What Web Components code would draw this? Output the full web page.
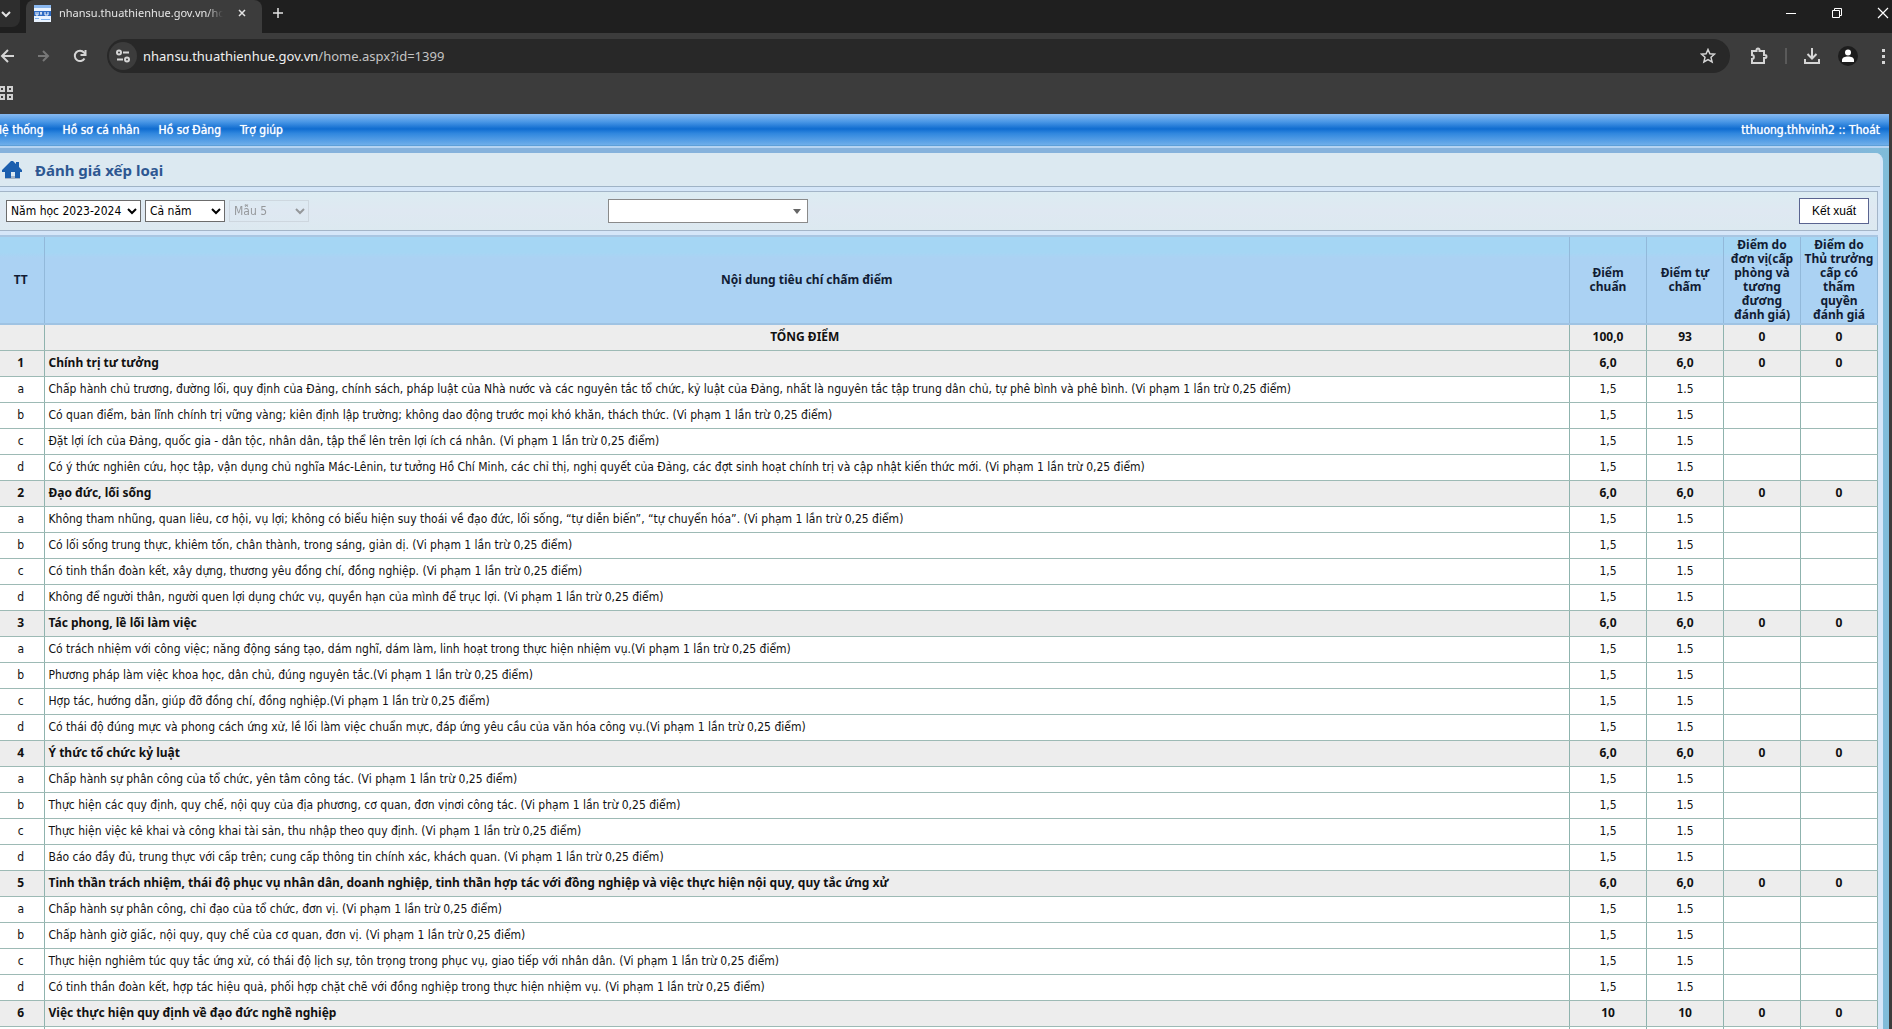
<!DOCTYPE html>
<html lang="vi">
<head>
<meta charset="utf-8">
<title>Đánh giá xếp loại</title>
<style>
html,body{margin:0;height:100%}
body{--ui:"Noto Sans","Open Sans",sans-serif;--text:"DejaVu Sans Condensed","DejaVu Sans",sans-serif;background:#3c3c3c;font-family:var(--ui);font-size:12px;color:#111;overflow:hidden}
</style>
</head>
<body>
<browser-window>
  <browser-tabs slot="tabs">nhansu.thuathienhue.gov.vn/home.aspx</browser-tabs>
  <browser-toolbar slot="toolbar" host="nhansu.thuathienhue.gov.vn" path="/home.aspx?id=1399"></browser-toolbar>
  <site-menu user="tthuong.thhvinh2">
    <a href="#">Hệ thống</a>
    <a href="#">Hồ sơ cá nhân</a>
    <a href="#">Hồ sơ Đảng</a>
    <a href="#">Trợ giúp</a>
  </site-menu>
  <page-panel>
    <page-heading>Đánh giá xếp loại</page-heading>
    <filter-bar></filter-bar>
    <score-table></score-table>
  </page-panel>
</browser-window>
<script>
class Base extends HTMLElement {
  connectedCallback() {
    if (this.shadowRoot) return;
    this.attachShadow({ mode: "open" }).innerHTML = this.view();
  }
}

customElements.define("browser-window", class extends Base {
  view() { return `<style>
    :host{display:flex;flex-direction:column;height:100vh;overflow:hidden;background:#3c3c3c}
    header{flex:none;height:114px;background:#3c3c3c}
    nav{height:28px;display:flex;align-items:center}
    nav svg{display:block}
    main{flex:1;min-height:0;overflow:hidden;margin-right:3px;background:#89b6dd;display:flex;flex-direction:column}
  </style>
  <header>
    <slot name="tabs"></slot>
    <slot name="toolbar"></slot>
    <nav aria-label="Bookmarks"><svg width="14" height="16" viewBox="0 0 14 16" fill="none" stroke="#d0d0d0" stroke-width="2"><path d="M0 2h4v4h-4zM8 2h4v4h-4zM0 10h4v4h-4zM8 10h4v4h-4z"/></svg></nav>
  </header>
  <main><slot></slot></main>`; }
});

customElements.define("browser-tabs", class extends Base {
  view() { return `<style>
    :host{display:flex;height:33px;background:#1f1f1f;color:#e6e6e6}
    button{border:0;background:none;padding:0;margin:0;display:grid;place-items:center;color:inherit}
    svg{display:block;fill:none;stroke:#e3e3e3;stroke-width:2}
    .list{width:20px;height:27px;background:#2e2e2e;border-radius:0 0 8px 0;margin-right:6px;padding-right:8px}
    .tab{width:236px;box-sizing:border-box;background:#3c3c3c;border-radius:8px 8px 0 0;display:flex;align-items:center;padding:0 16px 7px 8px}
    .tab .fav{flex:none;margin-right:8px}
    .name{flex:none;width:164px;overflow:hidden;white-space:nowrap;font-size:11px;line-height:18px;-webkit-mask:linear-gradient(90deg,#000 148px,transparent 164px);mask:linear-gradient(90deg,#000 148px,transparent 164px)}
    .close{margin-left:auto}
    .new{width:32px;padding-bottom:7px}
    .win{margin-left:auto;display:flex;padding-bottom:7px}
    .win button{width:46px}
    .win button:last-child{width:46px;margin-right:-14px}
    .win svg{stroke-width:1;stroke:#fff}
  </style>
  <button class="list" aria-label="Search tabs"><svg width="10" height="8" viewBox="0 0 10 8"><path d="M1 2l4 4 4-4"/></svg></button>
  <div class="tab">
    <svg class="fav" width="17" height="17" viewBox="0 0 17 17" stroke="none"><path fill="#e9f3ff" stroke="none" d="M0 0h17v17H0z"/><path fill="#8ab8f0" stroke="none" d="M0 0h17v3H0z"/><path fill="#2f6cc4" stroke="none" d="M0 6h17v5H0z"/><path stroke="#fff" stroke-width="1" d="M2 7v3h2V7M7 7v3M6 8h2M11 7v3h3V7"/><path stroke="#7fb2ee" stroke-width="1" d="M1 13.500h4M7 14.500h9"/></svg>
    <span class="name"><slot></slot></span>
    <button class="close" aria-label="Close tab"><svg width="8" height="8" viewBox="0 0 8 8"><path d="M1 1l6 6M7 1L1 7" stroke-width="1.500"/></svg></button>
  </div>
  <button class="new" aria-label="New tab"><svg width="12" height="12" viewBox="0 0 12 12"><path d="M6 1v10M1 6h10" stroke-width="1.500"/></svg></button>
  <div class="win">
    <button aria-label="Minimize"><svg width="12" height="12" viewBox="0 0 12 12"><path d="M1 6.500h10"/></svg></button>
    <button aria-label="Restore"><svg width="12" height="12" viewBox="0 0 12 12"><path d="M1.500 3.500h7v7h-7zM3.500 3V1.500h7v7H9"/></svg></button>
    <button aria-label="Close"><svg width="12" height="12" viewBox="0 0 12 12"><path d="M1 1l10 10M11 1L1 11" stroke-width="1.200"/></svg></button>
  </div>`; }
});

customElements.define("browser-toolbar", class extends Base {
  view() { return `<style>
    :host{display:flex;align-items:center;height:46px;color:#e3e3e3}
    button{border:0;background:none;padding:0;display:grid;place-items:center;color:inherit}
    svg{display:block;fill:none;stroke:#d5d5d5;stroke-width:2}
    .back{width:16px}.fwd{width:20px;margin-left:17px}.re{width:20px;margin:0 17px}
    .fwd svg{stroke:#777}
    .bar{flex:1;height:34px;border-radius:17px;background:#282828;display:flex;align-items:center;padding:0 14px 0 2px;min-width:0}
    .site{width:28px;height:28px;border-radius:14px;background:#3c3c3c;margin-right:6px}
    .url{flex:1;font-size:13px;line-height:20px;color:#c4c4c4;white-space:nowrap}
    .url b{font-weight:400;color:#f0f0f0}
    .end{display:flex;align-items:center;width:162px}
    .ext{width:20px;margin-left:19px}
    .sep{width:2px;height:16px;background:#5a5a5a;margin:0 16px}
    .prof{width:20px;margin-left:17px}
    .more{margin-left:auto;margin-right:6px}
  </style>
  <button class="back" aria-label="Back"><svg width="16" height="14" viewBox="0 0 16 14"><path d="M14 7H3M8 1L2 7l6 6"/></svg></button>
  <button class="fwd" aria-label="Forward"><svg width="14" height="14" viewBox="0 0 14 14"><path d="M2 7h10M7 2l5 5-5 5"/></svg></button>
  <button class="re" aria-label="Reload"><svg width="16" height="16" viewBox="0 0 16 16"><path d="M12.500 10.500A5.200 5.200 0 1 1 12 4.500L13.500 6"/><path d="M13.500 2v5h-5"/></svg></button>
  <div class="bar">
    <button class="site" aria-label="Site information"><svg width="14" height="14" viewBox="0 0 14 14" stroke-width="1.600"><circle cx="3" cy="3.500" r="2"/><path d="M7 3.500h6M1 10.500h6"/><circle cx="11" cy="10.500" r="2"/></svg></button>
    <span class="url"><b>${this.getAttribute("host")}</b>${this.getAttribute("path")}</span>
    <button aria-label="Bookmark this page"><svg width="16" height="16" viewBox="0 0 16 16"><path stroke-width="1.500" d="M8 1.500l1.900 4.300 4.600.4-3.500 3.100 1.100 4.600L8 11.500l-4.100 2.400L5 9.300 1.500 6.200l4.600-.4z"/></svg></button>
  </div>
  <div class="end">
    <button class="ext" aria-label="Extensions"><svg width="18" height="18" viewBox="0 0 18 18"><path d="M2 4h4.500V3a1.500 1.500 0 0 1 3 0v1H14v4h1a1.500 1.500 0 0 1 0 3h-1v5H2v-4c2.500 0 2.500-4 0-4z"/></svg></button>
    <span class="sep"></span>
    <button aria-label="Downloads"><svg width="18" height="18" viewBox="0 0 18 18"><path d="M9 1v10M4.500 7L9 11.500 13.500 7M2 12v4h14v-4"/></svg></button>
    <button class="prof" aria-label="Profile"><svg width="20" height="20" viewBox="0 0 20 20" stroke="none"><circle cx="10" cy="10" r="10" fill="#1d1d1d" stroke="none"/><circle cx="10" cy="6.500" r="3" fill="#fff" stroke="none"/><path fill="#fff" stroke="none" d="M4 16v-2c0-2.500 3-3.500 6-3.500s6 1 6 3.500v2z"/></svg></button>
    <button class="more" aria-label="Menu"><svg width="4" height="16" viewBox="0 0 4 16"><path fill="#d5d5d5" stroke="none" d="M0 1h3v3H0zM0 7h3v3H0zM0 13h3v3H0z"/></svg></button>
  </div>`; }
});

customElements.define("site-menu", class extends Base {
  view() { return `<style>
    :host{flex:none;display:flex;align-items:center;box-sizing:border-box;height:32px;padding:0 9px 0 0;color:#fff;font-family:var(--text);font-size:12px;white-space:nowrap;
      background:linear-gradient(#86b9f0,#4a97e6 25%,#0f6cd0 48%,#2f86de 62%,#6eaeea 100%);border-bottom:1px solid #5d9fd8;text-shadow:0 0 1px #fff}
    ::slotted(a),a{color:#fff;text-decoration:none}
    nav{display:flex;gap:19px;margin-left:-6px}
    .user{margin-left:auto}
  </style>
  <nav><slot></slot></nav>
  <span class="user">${this.getAttribute("user")} :: <a href="#">Thoát</a></span>`; }
});

customElements.define("page-panel", class extends Base {
  view() { return `<style>
    :host{flex:1;min-height:0;display:block;box-sizing:border-box;border-top:2px solid #b5d4f2;padding-top:5px;background:linear-gradient(90deg,#86b2dc calc(100% - 60px),#7fbcd9)}
    section{height:100%;margin-right:6px;background:#d5e6f8;border-radius:0 8px 0 0;overflow:hidden}
  </style><section><slot></slot></section>`; }
});

customElements.define("page-heading", class extends Base {
  view() { return `<style>
    :host{display:block;margin-right:3px;background:#dce9f1;border-bottom:1px solid #9fb3c6}
    h1{margin:0;height:33px;display:flex;align-items:center;gap:13px;padding-left:2px;font-size:15px;line-height:20px;font-weight:700;color:#2d5791}
    svg{display:block}
  </style>
  <h1><svg width="20" height="20" viewBox="0 0 20 20"><path fill="#8a9db5" d="M3 16h15v3H3z" opacity=".7"/><path fill="#1c5fae" d="M9 1h2l3 3V2h3v5l3 3v2h-2v6h-5v-6H9v6H3v-6H0v-2z"/></svg><slot></slot></h1>`; }
});

customElements.define("filter-bar", class extends Base {
  view() { return `<style>
    :host{display:flex;align-items:center;box-sizing:border-box;height:40px;margin:4px 5px 0 0;padding:0 8px 0 6px;background:linear-gradient(#dcecf2,#dfe8f2 50%,#dce9f0);border:solid #a3b5c8;border-width:1px 1px 1px 0}
    select,input,button{font-family:var(--text);font-size:12px;color:#000;box-sizing:border-box;margin:0;border-radius:0}
    select{height:22px;background:#fff;border:1px solid #6c6c6c;padding:0}
    .year{width:135px}.term{width:80px;margin-left:4px}.form{width:80px;margin-left:4px;border-color:#c8d0d8;background:transparent;color:#777}
    .left{width:608px;box-sizing:border-box;margin-right:-6px}
    .left,.combo{display:flex;align-items:center}
    .combo{width:200px;height:24px;box-sizing:border-box;border:1px solid #8a8a8a;background:#fff}
    .combo input{flex:1;min-width:0;border:0;background:none;height:20px;outline:0}
    .combo button{border:0;background:none;width:20px;height:20px;padding:0;display:grid;place-items:center}
    svg{display:block}
    .out{margin-left:auto;width:70px;height:26px;border:1px solid #5a6490;background:#fff;padding:0;font-family:"Liberation Sans",sans-serif}
  </style>
  <div class="left">
    <select class="year" aria-label="Năm học"><option>Năm học 2023-2024</option></select>
    <select class="term" aria-label="Kỳ"><option>Cả năm</option></select>
    <select class="form" aria-label="Mẫu" disabled><option>Mẫu 5</option></select>
  </div>
  <div class="combo"><input type="text" aria-label="Đơn vị"><button aria-label="Mở"><svg width="8" height="5" viewBox="0 0 8 5"><path fill="#666" d="M0 0h8L4 5z"/></svg></button></div>
  <button class="out">Kết xuất</button>`; }
});

const V = " (Vi phạm 1 lần trừ 0,25 điểm)";
const groups = [
  ["1", "Chính trị tư tưởng", "6,0", [
    "Chấp hành chủ trương, đường lối, quy định của Đảng, chính sách, pháp luật của Nhà nước và các nguyên tắc tổ chức, kỷ luật của Đảng, nhất là nguyên tắc tập trung dân chủ, tự phê bình và phê bình." + V,
    "Có quan điểm, bản lĩnh chính trị vững vàng; kiên định lập trường; không dao động trước mọi khó khăn, thách thức." + V,
    "Đặt lợi ích của Đảng, quốc gia - dân tộc, nhân dân, tập thể lên trên lợi ích cá nhân." + V,
    "Có ý thức nghiên cứu, học tập, vận dụng chủ nghĩa Mác-Lênin, tư tưởng Hồ Chí Minh, các chỉ thị, nghị quyết của Đảng, các đợt sinh hoạt chính trị và cập nhật kiến thức mới." + V]],
  ["2", "Đạo đức, lối sống", "6,0", [
    "Không tham nhũng, quan liêu, cơ hội, vụ lợi; không có biểu hiện suy thoái về đạo đức, lối sống, “tự diễn biến”, “tự chuyển hóa”." + V,
    "Có lối sống trung thực, khiêm tốn, chân thành, trong sáng, giản dị." + V,
    "Có tinh thần đoàn kết, xây dựng, thương yêu đồng chí, đồng nghiệp." + V,
    "Không để người thân, người quen lợi dụng chức vụ, quyền hạn của mình để trục lợi." + V]],
  ["3", "Tác phong, lề lối làm việc", "6,0", [
    "Có trách nhiệm với công việc; năng động sáng tạo, dám nghĩ, dám làm, linh hoạt trong thực hiện nhiệm vụ." + V.trim(),
    "Phương pháp làm việc khoa học, dân chủ, đúng nguyên tắc." + V.trim(),
    "Hợp tác, hướng dẫn, giúp đỡ đồng chí, đồng nghiệp." + V.trim(),
    "Có thái độ đúng mực và phong cách ứng xử, lề lối làm việc chuẩn mực, đáp ứng yêu cầu của văn hóa công vụ." + V.trim()]],
  ["4", "Ý thức tổ chức kỷ luật", "6,0", [
    "Chấp hành sự phân công của tổ chức, yên tâm công tác." + V,
    "Thực hiện các quy định, quy chế, nội quy của địa phương, cơ quan, đơn vịnơi công tác." + V,
    "Thực hiện việc kê khai và công khai tài sản, thu nhập theo quy định." + V,
    "Báo cáo đầy đủ, trung thực với cấp trên; cung cấp thông tin chính xác, khách quan." + V]],
  ["5", "Tinh thần trách nhiệm, thái độ phục vụ nhân dân, doanh nghiệp, tinh thần hợp tác với đồng nghiệp và việc thực hiện nội quy, quy tắc ứng xử", "6,0", [
    "Chấp hành sự phân công, chỉ đạo của tổ chức, đơn vị." + V,
    "Chấp hành giờ giấc, nội quy, quy chế của cơ quan, đơn vị." + V,
    "Thực hiện nghiêm túc quy tắc ứng xử, có thái độ lịch sự, tôn trọng trong phục vụ, giao tiếp với nhân dân." + V,
    "Có tinh thần đoàn kết, hợp tác hiệu quả, phối hợp chặt chẽ với đồng nghiệp trong thực hiện nhiệm vụ." + V]],
  ["6", "Việc thực hiện quy định về đạo đức nghề nghiệp", "10", []]
];

customElements.define("score-table", class extends Base {
  row(cls, cells) {
    return `<tr class="${cls}">${cells.map(c => `<td>${c}</td>`).join("")}</tr>`;
  }
  view() {
    const body = groups.map(([n, name, pts, items]) =>
      this.row("g", [n, name, pts, pts, "0", "0"]) +
      items.map((t, i) => this.row("", ["abcd"[i], t, "1,5", "1.5", "", ""])).join("")).join("");
    return `<style>
    :host{display:block;margin:4px 5px 0 0;border-top:2px solid #a9c6e2}
    table{border-collapse:collapse;table-layout:fixed;width:100%;background:#fff}
    .n{width:44px}.p{width:77px}
    th{box-sizing:border-box;height:87px;padding:0 3px;background:linear-gradient(#a5d6f4,#a5d6f4 18%,#abd2f3 24%);border-right:1px solid #92b9da;border-bottom:2px solid #9fc3e3;font-size:12px;line-height:14px;color:#111c33}
    td{box-sizing:border-box;height:26px;padding:0;text-align:center;font-family:var(--text);line-height:16px;white-space:nowrap;overflow:hidden;border-right:1px solid #8fb3ae;border-bottom:1px solid #9dbab5}
    td:first-child{padding-right:2px}
    th:first-child{padding:0 4px 0 2px}
    td:nth-child(2){text-align:left;padding-left:4px}
    .g td,.t td{background:#ededed;font-family:var(--ui);font-weight:700}
    .t td:nth-child(2){text-align:center;padding:0 4px 0 0}
    </style>
    <table>
      <colgroup><col class="n"><col><col class="p"><col class="p"><col class="p"><col class="p"></colgroup>
      <thead><tr><th>TT</th><th>Nội dung tiêu chí chấm điểm</th><th>Điểm chuẩn</th><th>Điểm tự chấm</th><th>Điểm do đơn vị(cấp phòng và tương đương đánh giá)</th><th>Điểm do Thủ trưởng cấp có thẩm quyền đánh giá</th></tr></thead>
      <tbody>${this.row("t", ["", "TỔNG ĐIỂM", "100,0", "93", "0", "0"])}${body}${this.row("", ["", "", "", "", "", ""])}</tbody>
    </table>`;
  }
});
</script>
</body>
</html>
